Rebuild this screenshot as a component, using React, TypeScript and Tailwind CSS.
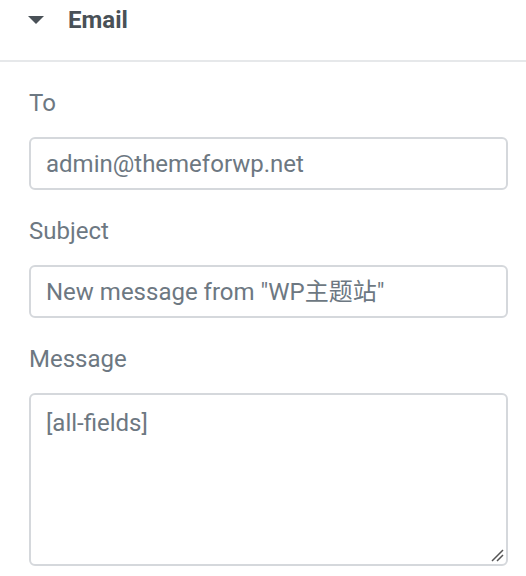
import React from 'react';

const fields = [
  { label: 'To', value: 'admin@themeforwp.net' },
  { label: 'Subject', value: 'New message from "WP主题站"' },
];

const App = () => {
  return (
    <div
      className="w-[526px] h-[576px] bg-white overflow-hidden text-[#6d7882]"
      style={{ fontFamily: 'Roboto, "Noto Sans CJK SC", sans-serif' }}
    >
      <div className="flex items-center h-[62px] pl-[28px] border-b-2 border-[#e6e8ea]">
        <svg width="16" height="9" viewBox="0 0 16 9" className="mt-[-20px]">
          <path d="M0 0 H16 L8 8 Z" fill="#495157" />
        </svg>
        <span className="ml-[24px] mt-[-20px] text-[24px] font-bold text-[#495157]">Email</span>
      </div>
      <div className="px-[29px] pt-[26px] flex flex-col">
        {fields.map((f) => (
          <div key={f.label} className="flex flex-col mb-[26px]">
            <label className="text-[24px] leading-[30px]">{f.label}</label>
            <div className="mt-[19px] h-[53px] w-[479px] border-2 border-[#d5d8dc] rounded-[6px] flex items-center pl-[15px] text-[24px]">
              {f.value}
            </div>
          </div>
        ))}
        <div className="flex flex-col">
          <label className="text-[24px] leading-[30px]">Message</label>
          <div className="relative mt-[19px] h-[173px] w-[479px] border-2 border-[#d5d8dc] rounded-[6px] pl-[15px] pt-[10px] text-[24px]">
            [all-fields]
            <svg width="14" height="14" viewBox="0 0 14 14" className="absolute right-[2px] bottom-[2px]">
              <path d="M2 13 L13 2 M7 13 L13 7" stroke="#555" strokeWidth="1.5" />
            </svg>
          </div>
        </div>
      </div>
    </div>
  );
};

export default App;
